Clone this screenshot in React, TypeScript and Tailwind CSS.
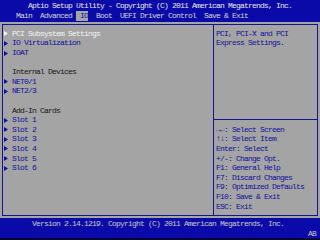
type Row =
  | { kind: "item"; text: string; selected?: boolean }
  | { kind: "label"; text: string }
  | { kind: "blank" };

const rows: Row[] = [
  { kind: "item", text: "PCI Subsystem Settings", selected: true },
  { kind: "item", text: "IO Virtualization" },
  { kind: "item", text: "IOAT" },
  { kind: "blank" },
  { kind: "label", text: "Internal Devices" },
  { kind: "item", text: "NET0/1" },
  { kind: "item", text: "NET2/3" },
  { kind: "blank" },
  { kind: "label", text: "Add-In Cards" },
  { kind: "item", text: "Slot 1" },
  { kind: "item", text: "Slot 2" },
  { kind: "item", text: "Slot 3" },
  { kind: "item", text: "Slot 4" },
  { kind: "item", text: "Slot 5" },
  { kind: "item", text: "Slot 6" },
];

const keys = [
  "→←: Select Screen",
  "↑↓: Select Item",
  "Enter: Select",
  "+/-: Change Opt.",
  "F1: General Help",
  "F7: Discard Changes",
  "F9: Optimized Defaults",
  "F10: Save & Exit",
  "ESC: Exit",
];

function Arrow({ selected }: { selected?: boolean }) {
  return (
    <svg width="4" height="5" viewBox="0 0 4 5" className="mt-[0.5px]">
      <polygon
        points="0,0 4,2.5 0,5"
        fill={selected ? "#f4f4f4" : "#1010a0"}
      />
    </svg>
  );
}

export default function App() {
  return (
    <div className="flex h-[240px] w-[320px] flex-col overflow-hidden bg-[#a4a4a4] font-['Liberation_Mono','DejaVu_Sans_Mono',monospace] text-[8px] tracking-[-0.8px] whitespace-pre">
      {/* title + tabs */}
      <header className="h-[22px] bg-[#0a0aa8] pt-[1px]">
        <div className="h-[10px] pl-[28px] leading-[10px] text-[#e8e8e8]">
          Aptio Setup Utility - Copyright (C) 2011 American Megatrends, Inc.
        </div>
        <div className="flex h-[10px] leading-[10px] text-[#d4d4d4]">
          <span>{"    Main  Advanced "}</span>
          <span className="bg-[#a4a4a4] text-[#1010a0]">{" IO"}</span>
          <span>{"  Boot  UEFI Driver Control  Save & Exit"}</span>
        </div>
      </header>

      {/* panels */}
      <main className="h-[196px] pt-[2px]">
        <div className="ml-[2px] flex h-[192px] w-[316px] border border-[#14148c]">
          <section className="w-[211px] border-r border-[#14148c] pt-[3.8px]">
            {rows.map((row, index) => (
              <div key={index} className="flex h-[9.6px] items-center leading-[9.6px]">
                <div className="flex w-[9px] items-center pl-[1px]">
                  {row.kind === "item" ? <Arrow selected={row.selected} /> : null}
                </div>
                {row.kind === "item" ? (
                  <span className={row.selected ? "text-[#f4f4f4]" : "text-[#1010a0]"}>
                    {row.text}
                  </span>
                ) : row.kind === "label" ? (
                  <span className="text-[#161616]">{row.text}</span>
                ) : null}
              </div>
            ))}
          </section>

          <section className="flex-1 pt-[3.8px]">
            <div className="h-[86.4px] pl-[2px] leading-[9.6px] text-[#1010a0]">
              <div>PCI, PCI-X and PCI</div>
              <div>Express Settings.</div>
            </div>
            <div className="flex h-[9.6px] items-center">
              <div className="h-px w-full bg-[#14148c]" />
            </div>
            <div className="pl-[2px] leading-[9.6px] text-[#1010a0]">
              {keys.map((key) => (
                <div key={key}>{key}</div>
              ))}
            </div>
          </section>
        </div>
      </main>

      {/* footer */}
      <footer className="h-[20px] bg-[#0a0aa8] pt-[1px] text-[#c8c8c8]">
        <div className="h-[10px] pl-[32px] leading-[10px]">
          Version 2.14.1219. Copyright (C) 2011 American Megatrends, Inc.
        </div>
        <div className="h-[9px] pr-[4px] text-right leading-[9px]">AB</div>
      </footer>
      <div className="flex-1 bg-[#06063a]" />
    </div>
  );
}
